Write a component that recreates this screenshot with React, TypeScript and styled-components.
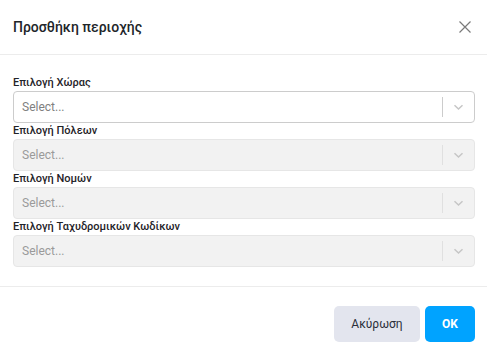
import styled, { createGlobalStyle } from 'styled-components';

const GlobalStyle = createGlobalStyle`
  html, body {
    margin: 0;
    padding: 0;
    background: #ffffff;
    font-family: Roboto, "Noto Sans", sans-serif;
  }
`;

const Modal = styled.div`
  width: 487px;
  height: 357px;
  display: flex;
  flex-direction: column;
  background: #fff;
`;

const Header = styled.div`
  height: 55px;
  display: flex;
  align-items: center;
  justify-content: space-between;
  padding: 0 12px 0 13px;
  border-bottom: 1px solid #ececec;
  box-sizing: border-box;
`;

const Title = styled.h2`
  margin: 0;
  font-size: 14px;
  font-weight: 500;
  color: #212529;
`;

const CloseButton = styled.button`
  width: 20px;
  height: 20px;
  padding: 0;
  border: none;
  background: none;
  display: flex;
  align-items: center;
  justify-content: center;
  color: #7a7a7a;
`;

const Body = styled.div`
  padding: 20px 12px 19px 13px;
  display: flex;
  flex-direction: column;
  border-bottom: 1px solid #ececec;
`;

const Label = styled.label`
  display: block;
  font-size: 11px;
  line-height: 16px;
  font-weight: 500;
  color: #1f2328;
`;

const SelectBox = styled.div<{ $disabled?: boolean }>`
  height: 32px;
  box-sizing: border-box;
  display: flex;
  align-items: center;
  border: 1px solid ${({ $disabled }) => ($disabled ? '#e6e6e6' : '#cccccc')};
  border-radius: 4px;
  background: ${({ $disabled }) => ($disabled ? '#f2f2f2' : '#ffffff')};
`;

const Placeholder = styled.span<{ $disabled?: boolean }>`
  flex: 1;
  padding-left: 8px;
  font-size: 12px;
  color: ${({ $disabled }) => ($disabled ? '#9a9a9a' : '#808080')};
`;

const Separator = styled.span<{ $disabled?: boolean }>`
  width: 1px;
  height: 20px;
  background: ${({ $disabled }) => ($disabled ? '#e0e0e0' : '#cccccc')};
`;

const Indicator = styled.span`
  width: 31px;
  display: flex;
  justify-content: center;
  color: #c6c6c6;
`;

const Footer = styled.div`
  flex: 1;
  display: flex;
  justify-content: flex-end;
  align-items: flex-start;
  gap: 5px;
  padding: 19px 12px 0 0;
`;

const Button = styled.button<{ $primary?: boolean }>`
  height: 36px;
  border: none;
  border-radius: 5px;
  font-family: Roboto, "Noto Sans", sans-serif;
  font-size: 12px;
  font-weight: ${({ $primary }) => ($primary ? 700 : 400)};
  padding: 0 ${({ $primary }) => ($primary ? '16px' : '13px')};
  min-width: ${({ $primary }) => ($primary ? '50px' : '86px')};
  color: ${({ $primary }) => ($primary ? '#ffffff' : '#2b2f3a')};
  background: ${({ $primary }) => ($primary ? '#00a3ff' : '#e3e5ee')};
`;

const fields = [
  { label: 'Επιλογή Χώρας', disabled: false },
  { label: 'Επιλογή Πόλεων', disabled: true },
  { label: 'Επιλογή Νομών', disabled: true },
  { label: 'Επιλογή Ταχυδρομικών Κωδίκων', disabled: true },
];

function Chevron() {
  return (
    <svg width="11" height="10" viewBox="0 0 11 10" fill="none">
      <path d="M1.5 3.3 L5.5 7 L9.5 3.3" stroke="currentColor" strokeWidth="1.5" />
    </svg>
  );
}

export default function App() {
  return (
    <>
      <GlobalStyle />
      <Modal>
        <Header>
          <Title>Προσθήκη περιοχής</Title>
          <CloseButton aria-label="close">
            <svg width="12" height="12" viewBox="0 0 12 12" fill="none">
              <path d="M0.5 0.5 L11.5 11.5 M11.5 0.5 L0.5 11.5" stroke="currentColor" strokeWidth="1.2" />
            </svg>
          </CloseButton>
        </Header>
        <Body>
          {fields.map((f) => (
            <div key={f.label}>
              <Label>{f.label}</Label>
              <SelectBox $disabled={f.disabled}>
                <Placeholder $disabled={f.disabled}>Select...</Placeholder>
                <Separator $disabled={f.disabled} />
                <Indicator>
                  <Chevron />
                </Indicator>
              </SelectBox>
            </div>
          ))}
        </Body>
        <Footer>
          <Button>Ακύρωση</Button>
          <Button $primary>OK</Button>
        </Footer>
      </Modal>
    </>
  );
}
